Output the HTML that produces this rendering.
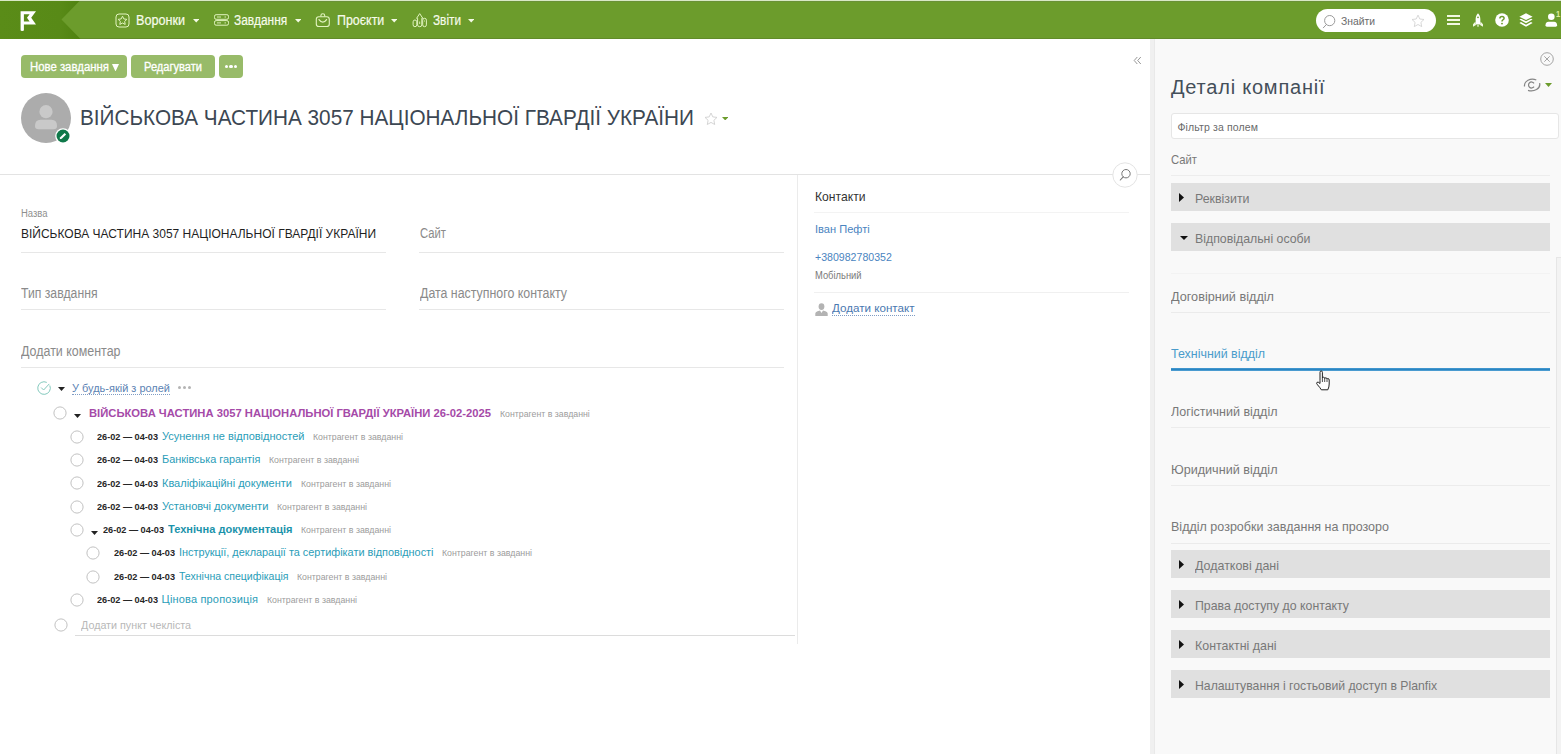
<!DOCTYPE html>
<html lang="uk"><head><meta charset="utf-8"><title>ВІЙСЬКОВА ЧАСТИНА 3057 НАЦІОНАЛЬНОЇ ГВАРДІЇ УКРАЇНИ</title>
<style>
html,body{margin:0;padding:0;background:#fff}
body{width:1561px;height:754px;position:relative;overflow:hidden;font-family:"Liberation Sans",sans-serif}
.r{position:absolute;display:block}
.t{position:absolute;display:inline-block;white-space:nowrap;line-height:1;transform-origin:0 0}
</style></head><body>
<div class="r" style="left:0px;top:0px;width:1561px;height:1px;background:#d9e8c6;"></div>
<div class="r" style="left:0px;top:1px;width:1561px;height:38px;background:#6c9c2c;"></div>
<div class="r" style="left:0px;top:1px;width:1561px;height:1px;background:#6a9137;"></div>
<div class="r" style="left:0px;top:38px;width:1561px;height:1px;background:#618b2a;"></div>
<svg class="r" style="left:0;top:1px" width="90" height="38" viewBox="0 0 90 38"><defs><linearGradient id="g1" x1="0" y1="0" x2="1" y2="0"><stop offset="0" stop-color="#5a8c18"/><stop offset="0.75" stop-color="#588a17"/><stop offset="1" stop-color="#4f8210"/></linearGradient></defs><path d="M0 0H79.5L61.5 18.5L80.5 38H0Z" fill="url(#g1)"/><path d="M20.6 10.2H36L31.2 16.8L36 23.6H23.9V29.2Q23.9 30 22.2 30Q20.6 30 20.6 29.2Z M23.9 13.3V20.5H29.6L27 16.8L29.6 13.3Z" fill="#fff" fill-rule="evenodd"/></svg>
<svg class="r" style="left:115px;top:13px" width="15" height="15" viewBox="0 0 15 15" fill="none" stroke="#e2f4c0" stroke-width="1"><rect x="1" y="1" width="13" height="13" rx="3"/><path d="M7.5 3.2l1.35 2.75 3 .4-2.2 2.1.55 3-2.7-1.45-2.7 1.45.55-3-2.2-2.1 3-.4z" stroke-linejoin="round"/></svg>
<svg class="r" style="left:213.5px;top:14px" width="15" height="12" viewBox="0 0 15 12" fill="none" stroke="#e2f4c0" stroke-width="1"><rect x="0.5" y="0.7" width="14" height="4.6" rx="1.6"/><rect x="0.5" y="6.6" width="14" height="4.6" rx="1.6"/><path d="M3 3h4M10.5 3h1.5M3 8.9h4M10.5 8.9h1.5" stroke-width="0.9"/></svg>
<svg class="r" style="left:315px;top:12px" width="16" height="16" viewBox="0 0 16 16" fill="none" stroke="#e2f4c0" stroke-width="1.1"><rect x="1.3" y="4.7" width="13" height="9.8" rx="2.6"/><path d="M5.9 4.5V3.6Q5.9 1.8 7.8 1.8Q9.700 1.8 9.700 3.6V4.5"/><path d="M4 7.600Q7.800 12.800 11.600 7.600" stroke-linecap="round" stroke-width="1.2"/></svg>
<svg class="r" style="left:411.5px;top:12px" width="16" height="16" viewBox="0 0 16 16" fill="none" stroke="#e2f4c0" stroke-width="1"><rect x="1.1" y="8" width="3.7" height="6.700" rx="1.850"/><path d="M5.600 13V6.300H4.600L7.700 1.600L10.800 6.300H9.800V13Q9.800 14.700 7.700 14.700Q5.600 14.700 5.600 13Z" stroke-linejoin="round"/><rect x="10.700" y="6.300" width="3.700" height="8.400" rx="1.850"/><path d="M7.700 9.500V12M12.500 8.500V9.500" stroke-width="0.9"/></svg>
<span class="t" style="left:136.40px;top:13px;font-size:14px;color:#f6fbea;transform:scaleX(0.9031);-webkit-text-stroke:0.2px #f6fbea;">Воронки</span>
<span class="t" style="left:234.00px;top:13px;font-size:14px;color:#f6fbea;transform:scaleX(0.8509);-webkit-text-stroke:0.2px #f6fbea;">Завдання</span>
<span class="t" style="left:336.70px;top:13px;font-size:14px;color:#f6fbea;transform:scaleX(0.8876);-webkit-text-stroke:0.2px #f6fbea;">Проєкти</span>
<span class="t" style="left:432.70px;top:13px;font-size:14px;color:#f6fbea;transform:scaleX(0.8424);-webkit-text-stroke:0.2px #f6fbea;">Звіти</span>
<svg class="r" style="left:192.8px;top:19.2px" width="6.4" height="3.4" viewBox="0 0 6.4 3.4"><path d="M0 0h6.4L3.2 3.4z" fill="#f4fae6"/></svg>
<svg class="r" style="left:294.5px;top:19.2px" width="6.4" height="3.4" viewBox="0 0 6.4 3.4"><path d="M0 0h6.4L3.2 3.4z" fill="#f4fae6"/></svg>
<svg class="r" style="left:390.8px;top:19.2px" width="6.4" height="3.4" viewBox="0 0 6.4 3.4"><path d="M0 0h6.4L3.2 3.4z" fill="#f4fae6"/></svg>
<svg class="r" style="left:467.8px;top:19.2px" width="6.4" height="3.4" viewBox="0 0 6.4 3.4"><path d="M0 0h6.4L3.2 3.4z" fill="#f4fae6"/></svg>
<div class="r" style="left:1316px;top:9px;width:120px;height:23px;background:#fff;border-radius:12px;"></div>
<svg class="r" style="left:1322px;top:14px" width="14" height="15" viewBox="0 0 14 15" fill="none" stroke="#9a9a9a" stroke-width="1"><circle cx="7.7" cy="6.6" r="5.1"/><path d="M4.3 10.6L1.3 13.8" stroke-linecap="round"/></svg>
<span class="t" style="left:1341.00px;top:16px;font-size:11px;color:#6a6a6a;transform:scaleX(0.9402);">Знайти</span>
<svg class="r" style="left:1410.5px;top:14px" width="14" height="14" viewBox="0 0 14 14" fill="none" stroke="#d4d4d4" stroke-width="0.9"><path d="M7 1.1l1.8 3.9 4.2.5-3.1 2.9.8 4.2L7 10.5l-3.7 2.1.8-4.2L1 5.5l4.2-.5z" stroke-linejoin="round"/></svg>
<div class="r" style="left:1446.8px;top:15px;width:13.2px;height:1.9px;background:#f1f8e2;"></div>
<div class="r" style="left:1446.8px;top:19.2px;width:13.2px;height:1.9px;background:#f1f8e2;"></div>
<div class="r" style="left:1446.8px;top:23.4px;width:13.2px;height:1.9px;background:#f1f8e2;"></div>
<svg class="r" style="left:1471.5px;top:13px" width="12" height="14.5" viewBox="0 0 12 14.5"><path d="M6 0.2C8.2 2.4 8.6 5.4 8.3 8.4L8 11.5H4L3.700 8.4C3.4 5.4 3.8 2.4 6 0.200Z" fill="#fff"/><path d="M3.5 8.600L1 11.200V13.800L4 12Z M8.500 8.600L11 11.200V13.800L8 12Z" fill="#f1f8e2"/><path d="M5.300 12.100h1.400v1.700h-1.400z" fill="#e4f0cc"/><circle cx="6" cy="4.300" r="0.900" fill="#6c9c2c"/></svg>
<svg class="r" style="left:1494.5px;top:13.2px" width="14" height="14" viewBox="0 0 14 14"><circle cx="7" cy="7" r="6.8" fill="#fff"/><path d="M4.900 5.500Q4.900 3.400 7 3.400Q9.100 3.400 9.100 5.200Q9.100 6.300 7.900 6.900Q7 7.400 7 8.500" fill="none" stroke="#6c9c2c" stroke-width="1.500"/><circle cx="7" cy="10.600" r="0.950" fill="#6c9c2c"/></svg>
<svg class="r" style="left:1519px;top:13px" width="14" height="14.500" viewBox="0 0 14 14.500"><path d="M7 0.300L13.600 3.700L7 7.100L0.400 3.700Z" fill="#fff"/><path d="M2 5.700L0.400 6.600L7 10.200L13.600 6.600L12 5.700L7 8.300Z" fill="#fff"/><path d="M2 9.100L0.400 10L7 13.700L13.600 10L12 9.100L7 11.700Z" fill="#fff"/></svg>
<svg class="r" style="left:1544.5px;top:13px" width="13" height="14" viewBox="0 0 13 14"><circle cx="6.300" cy="3.800" r="3.300" fill="#fff"/><path d="M0.500 12.300Q0.500 8.700 3.600 8.700H9Q12.100 8.700 12.100 12.300Q12.100 13.700 10.800 13.700H1.800Q0.500 13.700 0.500 12.300Z" fill="#fff"/></svg>
<span class="t" style="left:1556.30px;top:10px;font-size:9px;color:#dcea9e;font-weight:bold;transform:scaleX(0.8392);">1</span>
<div class="r" style="left:21px;top:55px;width:105.5px;height:23px;background:#98bb69;border-radius:4px;"></div>
<div class="r" style="left:131px;top:55px;width:84px;height:23px;background:#98bb69;border-radius:4px;"></div>
<div class="r" style="left:219.3px;top:55px;width:23.4px;height:23px;background:#98bb69;border-radius:4px;"></div>
<span class="t" style="left:29.50px;top:61px;font-size:12px;color:#fff;transform:scaleX(0.9469);-webkit-text-stroke:0.3px #fff;">Нове завдання</span>
<svg class="r" style="left:112px;top:63.5px" width="7" height="7.500" viewBox="0 0 7 7.500"><path d="M0 0h7L3.500 7.500z" fill="#fff"/></svg>
<span class="t" style="left:144.00px;top:61px;font-size:12px;color:#fff;transform:scaleX(0.9238);-webkit-text-stroke:0.3px #fff;">Редагувати</span>
<div class="r" style="left:224.6px;top:65px;width:3.2px;height:3.2px;background:#fff;border-radius:2px;"></div>
<div class="r" style="left:229.4px;top:65px;width:3.2px;height:3.2px;background:#fff;border-radius:2px;"></div>
<div class="r" style="left:234.20000000000002px;top:65px;width:3.2px;height:3.2px;background:#fff;border-radius:2px;"></div>
<svg class="r" style="left:21px;top:93px" width="50" height="50" viewBox="0 0 50 50"><circle cx="25" cy="25" r="25" fill="#acacac"/><circle cx="25" cy="18.700" r="6.600" fill="#c9c9c9"/><path d="M14 33Q14 26.800 19.500 26.800H30.500Q36 26.800 36 33Q36 36.300 32.500 36.300H17.500Q14 36.300 14 33Z" fill="#c9c9c9"/></svg>
<svg class="r" style="left:54.500px;top:127.500px" width="16" height="16" viewBox="0 0 16 16"><circle cx="8" cy="8" r="7.800" fill="#fff"/><circle cx="8" cy="8" r="6.500" fill="#10794a"/><path d="M4.700 11.300L5.200 9.300L9.600 4.900L11.100 6.400L6.700 10.800Z" fill="#fff"/></svg>
<span class="t" style="left:80.00px;top:108px;font-size:21.5px;color:#3c4753;transform:scaleX(0.9651);">ВІЙСЬКОВА ЧАСТИНА 3057 НАЦІОНАЛЬНОЇ ГВАРДІЇ УКРАЇНИ</span>
<svg class="r" style="left:703.500px;top:111.500px" width="14" height="14" viewBox="0 0 14 14" fill="none" stroke="#cfcfcf" stroke-width="0.9"><path d="M7 1l1.800 3.900 4.200.5-3.100 2.900.8 4.200L7 10.400l-3.700 2.100.8-4.200L1 5.400l4.200-.5z" stroke-linejoin="round"/></svg>
<svg class="r" style="left:722px;top:117px" width="6.400" height="3.400" viewBox="0 0 6.400 3.400"><path d="M0 0h6.400L3.200 3.400z" fill="#6c9c2c"/></svg>
<svg class="r" style="left:1132.700px;top:55.600px" width="9" height="9" viewBox="0 0 9 9" fill="none" stroke="#8a8a8a" stroke-width="0.9"><path d="M4.300 1L1.200 4.500L4.300 8M7.800 1L4.700 4.500L7.800 8"/></svg>
<div class="r" style="left:0px;top:174px;width:1150px;height:1px;background:#e3e3e3;"></div>
<svg class="r" style="left:1112px;top:161.500px" width="26" height="26" viewBox="0 0 26 26"><circle cx="13" cy="13" r="12.200" fill="#fff" stroke="#e3e3e3" stroke-width="1"/><circle cx="14" cy="11.700" r="4.200" fill="none" stroke="#777" stroke-width="1"/><path d="M11.200 14.800L8.300 18" stroke="#777" stroke-width="1.100" stroke-linecap="round"/></svg>
<span class="t" style="left:21.00px;top:209px;font-size:10px;color:#8f8f8f;transform:scaleX(0.9459);">Назва</span>
<span class="t" style="left:21.00px;top:227px;font-size:13.5px;color:#1f1f1f;transform:scaleX(0.8887);">ВІЙСЬКОВА ЧАСТИНА 3057 НАЦІОНАЛЬНОЇ ГВАРДІЇ УКРАЇНИ</span>
<span class="t" style="left:419.50px;top:226px;font-size:14px;color:#8a8a8a;transform:scaleX(0.8053);">Сайт</span>
<span class="t" style="left:21.00px;top:286px;font-size:14px;color:#8a8a8a;transform:scaleX(0.8722);">Тип завдання</span>
<span class="t" style="left:419.50px;top:286px;font-size:14px;color:#8a8a8a;transform:scaleX(0.8843);">Дата наступного контакту</span>
<span class="t" style="left:21.00px;top:344px;font-size:14px;color:#8a8a8a;transform:scaleX(0.8891);">Додати коментар</span>
<div class="r" style="left:21px;top:252px;width:365px;height:1px;background:#e7e7e7;"></div>
<div class="r" style="left:419px;top:252px;width:365px;height:1px;background:#e7e7e7;"></div>
<div class="r" style="left:21px;top:309px;width:365px;height:1px;background:#e7e7e7;"></div>
<div class="r" style="left:419px;top:309px;width:365px;height:1px;background:#e7e7e7;"></div>
<div class="r" style="left:21px;top:367px;width:763px;height:1px;background:#e7e7e7;"></div>
<div class="r" style="left:797px;top:175px;width:1px;height:469px;background:#ebebeb;"></div>
<span class="t" style="left:814.50px;top:190px;font-size:13px;color:#333;transform:scaleX(0.9340);">Контакти</span>
<div class="r" style="left:814px;top:212px;width:315px;height:1px;background:#f3f3f3;"></div>
<span class="t" style="left:814.50px;top:224px;font-size:11.5px;color:#4a84c0;transform:scaleX(0.9629);">Іван Пефті</span>
<span class="t" style="left:814.50px;top:252px;font-size:11px;color:#4a84c0;transform:scaleX(0.9621);">+380982780352</span>
<span class="t" style="left:814.50px;top:271px;font-size:10px;color:#7a7a7a;transform:scaleX(0.9358);">Мобільний</span>
<div class="r" style="left:814px;top:292px;width:315px;height:1px;background:#f0f0f0;"></div>
<svg class="r" style="left:814.500px;top:302.500px" width="13" height="13" viewBox="0 0 13 13"><ellipse cx="6.500" cy="3.600" rx="2.900" ry="3.400" fill="#b3b3b3"/><path d="M0.300 13V10.600Q0.300 9 2.500 8.300L5 7.500L6.500 10L8 7.500L10.500 8.300Q12.700 9 12.700 10.600V13Z" fill="#b3b3b3"/></svg>
<span class="t" style="left:832.30px;top:303px;font-size:11.5px;color:#4a78b0;transform:scaleX(1.0103);">Додати контакт</span>
<div class="r" style="left:832px;top:315px;width:83px;height:0;border-top:1px dotted #7f9cc4"></div>
<svg class="r" style="left:37px;top:381px" width="14" height="14" viewBox="0 0 14 14" fill="none" stroke="#84c9bd" stroke-width="1"><path d="M12.800 4.500A6.300 6.300 0 1 1 9.800 1.400"/><path d="M4.400 6.800L6.600 9L12 3.200" stroke-linecap="round" stroke-linejoin="round"/></svg>
<svg class="r" style="left:58px;top:386.5px" width="7" height="4" viewBox="0 0 7 4"><path d="M0 0h7L3.500 4z" fill="#222"/></svg>
<span class="t" style="left:71.50px;top:383px;font-size:11.5px;color:#5b82b3;transform:scaleX(0.9542);">У будь-якій з ролей</span>
<div class="r" style="left:72px;top:394px;width:97.500px;height:0;border-top:1px dotted #7f9cc4"></div>
<div class="r" style="left:178.3px;top:386px;width:3px;height:3px;background:#b4b4b4;border-radius:2px;"></div>
<div class="r" style="left:183.0px;top:386px;width:3px;height:3px;background:#b4b4b4;border-radius:2px;"></div>
<div class="r" style="left:187.8px;top:386px;width:3px;height:3px;background:#b4b4b4;border-radius:2px;"></div>
<svg class="r" style="left:52px;top:405.2px" width="16" height="16" viewBox="0 0 16 16"><circle cx="8" cy="8" r="6.1" fill="#fff" stroke="#c2c2c2" stroke-width="1"/></svg>
<svg class="r" style="left:74px;top:413.5px" width="7" height="4" viewBox="0 0 7 4"><path d="M0 0h7L3.500 4z" fill="#222"/></svg>
<span class="t" style="left:89.00px;top:408px;font-size:11.5px;color:#a54aa8;font-weight:bold;transform:scaleX(0.9768);">ВІЙСЬКОВА ЧАСТИНА 3057 НАЦІОНАЛЬНОЇ ГВАРДІЇ УКРАЇНИ 26-02-2025</span>
<span class="t" style="left:500.00px;top:410px;font-size:9px;color:#9c9c9c;transform:scaleX(0.9727);">Контрагент в завданні</span>
<svg class="r" style="left:68.6px;top:428.7px" width="16" height="16" viewBox="0 0 16 16"><circle cx="8" cy="8" r="6.1" fill="#fff" stroke="#c2c2c2" stroke-width="1"/></svg>
<span class="t" style="left:97.30px;top:432px;font-size:9.5px;color:#262626;font-weight:bold;transform:scaleX(0.9626);">26-02 — 04-03</span>
<span class="t" style="left:161.60px;top:431px;font-size:11px;color:#2a9db8;transform:scaleX(1.0014);">Усунення не відповідностей</span>
<span class="t" style="left:313.00px;top:433px;font-size:9px;color:#9c9c9c;transform:scaleX(0.9749);">Контрагент в завданні</span>
<svg class="r" style="left:68.6px;top:452px" width="16" height="16" viewBox="0 0 16 16"><circle cx="8" cy="8" r="6.1" fill="#fff" stroke="#c2c2c2" stroke-width="1"/></svg>
<span class="t" style="left:97.30px;top:455px;font-size:9.5px;color:#262626;font-weight:bold;transform:scaleX(0.9626);">26-02 — 04-03</span>
<span class="t" style="left:161.60px;top:454px;font-size:11px;color:#2a9db8;transform:scaleX(0.9892);">Банківська гарантія</span>
<span class="t" style="left:268.80px;top:456px;font-size:9px;color:#9c9c9c;transform:scaleX(0.9749);">Контрагент в завданні</span>
<svg class="r" style="left:68.6px;top:475.3px" width="16" height="16" viewBox="0 0 16 16"><circle cx="8" cy="8" r="6.1" fill="#fff" stroke="#c2c2c2" stroke-width="1"/></svg>
<span class="t" style="left:97.30px;top:479px;font-size:9.5px;color:#262626;font-weight:bold;transform:scaleX(0.9626);">26-02 — 04-03</span>
<span class="t" style="left:161.60px;top:478px;font-size:11px;color:#2a9db8;transform:scaleX(0.9991);">Кваліфікаційні документи</span>
<span class="t" style="left:300.50px;top:480px;font-size:9px;color:#9c9c9c;transform:scaleX(0.9749);">Контрагент в завданні</span>
<svg class="r" style="left:68.6px;top:498.6px" width="16" height="16" viewBox="0 0 16 16"><circle cx="8" cy="8" r="6.1" fill="#fff" stroke="#c2c2c2" stroke-width="1"/></svg>
<span class="t" style="left:97.30px;top:502px;font-size:9.5px;color:#262626;font-weight:bold;transform:scaleX(0.9626);">26-02 — 04-03</span>
<span class="t" style="left:161.60px;top:501px;font-size:11px;color:#2a9db8;transform:scaleX(1.0101);">Установчі документи</span>
<span class="t" style="left:277.00px;top:503px;font-size:9px;color:#9c9c9c;transform:scaleX(0.9749);">Контрагент в завданні</span>
<svg class="r" style="left:68.6px;top:521.9px" width="16" height="16" viewBox="0 0 16 16"><circle cx="8" cy="8" r="6.1" fill="#fff" stroke="#c2c2c2" stroke-width="1"/></svg>
<svg class="r" style="left:90.5px;top:530.9px" width="7" height="4" viewBox="0 0 7 4"><path d="M0 0h7L3.500 4z" fill="#222"/></svg>
<span class="t" style="left:103.00px;top:525px;font-size:9.5px;color:#262626;font-weight:bold;transform:scaleX(0.9626);">26-02 — 04-03</span>
<span class="t" style="left:167.50px;top:524px;font-size:11px;color:#1b93ab;font-weight:bold;transform:scaleX(1.0042);">Технічна документація</span>
<span class="t" style="left:300.50px;top:526px;font-size:9px;color:#9c9c9c;transform:scaleX(0.9749);">Контрагент в завданні</span>
<svg class="r" style="left:85.25px;top:545.2px" width="16" height="16" viewBox="0 0 16 16"><circle cx="8" cy="8" r="6.1" fill="#fff" stroke="#c2c2c2" stroke-width="1"/></svg>
<span class="t" style="left:114.00px;top:548px;font-size:9.5px;color:#262626;font-weight:bold;transform:scaleX(0.9626);">26-02 — 04-03</span>
<span class="t" style="left:178.50px;top:547px;font-size:11px;color:#2a9db8;transform:scaleX(0.9900);">Інструкції, декларації та сертифікати відповідності</span>
<span class="t" style="left:441.50px;top:549px;font-size:9px;color:#9c9c9c;transform:scaleX(0.9749);">Контрагент в завданні</span>
<svg class="r" style="left:85.25px;top:568.5px" width="16" height="16" viewBox="0 0 16 16"><circle cx="8" cy="8" r="6.1" fill="#fff" stroke="#c2c2c2" stroke-width="1"/></svg>
<span class="t" style="left:114.00px;top:572px;font-size:9.5px;color:#262626;font-weight:bold;transform:scaleX(0.9626);">26-02 — 04-03</span>
<span class="t" style="left:178.50px;top:571px;font-size:11px;color:#2a9db8;transform:scaleX(0.9575);">Технічна специфікація</span>
<span class="t" style="left:297.00px;top:573px;font-size:9px;color:#9c9c9c;transform:scaleX(0.9749);">Контрагент в завданні</span>
<svg class="r" style="left:68.6px;top:591.8px" width="16" height="16" viewBox="0 0 16 16"><circle cx="8" cy="8" r="6.1" fill="#fff" stroke="#c2c2c2" stroke-width="1"/></svg>
<span class="t" style="left:97.30px;top:595px;font-size:9.5px;color:#262626;font-weight:bold;transform:scaleX(0.9626);">26-02 — 04-03</span>
<span class="t" style="left:161.60px;top:594px;font-size:11px;color:#2a9db8;letter-spacing:0.169px;">Цінова пропозиція</span>
<span class="t" style="left:267.00px;top:596px;font-size:9px;color:#9c9c9c;transform:scaleX(0.9749);">Контрагент в завданні</span>
<svg class="r" style="left:52.75px;top:616.5px" width="16" height="16" viewBox="0 0 16 16"><circle cx="8" cy="8" r="6.1" fill="#fff" stroke="#c2c2c2" stroke-width="1"/></svg>
<span class="t" style="left:81.00px;top:620px;font-size:11.5px;color:#b8b8b8;transform:scaleX(0.9335);">Додати пункт чекліста</span>
<div class="r" style="left:75px;top:635px;width:720px;height:1px;background:#dcdcdc;"></div>
<div class="r" style="left:1150px;top:39px;width:5px;height:715px;background:#f0f0f0;"></div>
<div class="r" style="left:1154px;top:39px;width:1px;height:715px;background:#e9e9e9;"></div>
<div class="r" style="left:1155px;top:39px;width:406px;height:715px;background:#f9f9f9;"></div>
<div class="r" style="left:1556px;top:257px;width:5px;height:497px;background:#f3f3f3;border-left:1px solid #e6e6e6;border-top:1px solid #e6e6e6;box-sizing:border-box;"></div>
<svg class="r" style="left:1539.500px;top:52px" width="14" height="14" viewBox="0 0 14 14" fill="none" stroke="#9a9a9a" stroke-width="0.9"><circle cx="7" cy="7" r="6.300"/><path d="M4.300 4.300L9.700 9.700M9.700 4.300L4.300 9.700"/></svg>
<svg class="r" style="left:1522.500px;top:77.500px" width="18" height="14" viewBox="0 0 18 14" fill="none" stroke="#858585" stroke-width="1.25"><path d="M1.500 8.500Q1 4.500 5 2.300Q9 0.300 13.300 2"/><path d="M16.600 5.200Q17.600 9 13.500 11.500Q9.500 13.700 5 12.300"/><path d="M11 5.300A3 3 0 1 0 11 8.700"/></svg>
<svg class="r" style="left:1545px;top:83px" width="7" height="4" viewBox="0 0 7 4"><path d="M0 0h7L3.500 4z" fill="#6c9c2c"/></svg>
<span class="t" style="left:1171.00px;top:77px;font-size:20px;color:#444f5a;letter-spacing:0.781px;">Деталі компанії</span>
<div class="r" style="left:1171px;top:112.5px;width:387.5px;height:26.5px;background:#fff;border:1px solid #e6e6e6;border-radius:3px;box-sizing:border-box;"></div>
<span class="t" style="left:1177.50px;top:122px;font-size:10.5px;color:#6a6a6a;letter-spacing:0.128px;">Фільтр за полем</span>
<span class="t" style="left:1171.00px;top:153px;font-size:13.5px;color:#787878;transform:scaleX(0.8351);">Сайт</span>
<div class="r" style="left:1171px;top:175px;width:379px;height:1px;background:#ededed;"></div>
<div class="r" style="left:1171px;top:182.6px;width:379px;height:28px;background:#e0e0e0;"></div>
<svg class="r" style="left:1179px;top:192.6px" width="5" height="9" viewBox="0 0 5 9"><path d="M0 0v9L5 4.500z" fill="#111"/></svg>
<span class="t" style="left:1195.00px;top:192px;font-size:13.5px;color:#787878;transform:scaleX(0.9167);">Реквізити</span>
<div class="r" style="left:1171px;top:222.7px;width:379px;height:28px;background:#e0e0e0;"></div>
<svg class="r" style="left:1179.500px;top:236.2px" width="8" height="4" viewBox="0 0 8 4"><path d="M0 0h8L4 4z" fill="#111"/></svg>
<span class="t" style="left:1195.00px;top:232px;font-size:13.5px;color:#787878;transform:scaleX(0.9126);">Відповідальні особи</span>
<div class="r" style="left:1171px;top:273px;width:379px;height:1px;background:#f3f3f3;"></div>
<span class="t" style="left:1171.00px;top:290px;font-size:13.5px;color:#787878;transform:scaleX(0.9389);">Договірний відділ</span>
<div class="r" style="left:1171px;top:312px;width:379px;height:1px;background:#ebebeb;"></div>
<span class="t" style="left:1171.00px;top:347px;font-size:13.5px;color:#4a9ccb;transform:scaleX(0.9214);">Технічний відділ</span>
<div class="r" style="left:1171px;top:368px;width:379px;height:1px;background:#3f95cd;"></div>
<div class="r" style="left:1171px;top:369px;width:379px;height:1px;background:#2a85c2;"></div>
<div class="r" style="left:1171px;top:370px;width:379px;height:1px;background:#4a9bd0;"></div>
<span class="t" style="left:1171.00px;top:405px;font-size:13.5px;color:#787878;transform:scaleX(0.9270);">Логістичний відділ</span>
<div class="r" style="left:1171px;top:427px;width:379px;height:1px;background:#ececec;"></div>
<span class="t" style="left:1171.00px;top:463px;font-size:13.5px;color:#787878;transform:scaleX(0.9324);">Юридичний відділ</span>
<div class="r" style="left:1171px;top:485px;width:379px;height:1px;background:#ececec;"></div>
<span class="t" style="left:1171.00px;top:520px;font-size:13.5px;color:#787878;transform:scaleX(0.9281);">Відділ розробки завдання на прозоро</span>
<div class="r" style="left:1171px;top:543px;width:379px;height:1px;background:#ebebeb;"></div>
<div class="r" style="left:1171px;top:550.1px;width:379px;height:28px;background:#e0e0e0;"></div>
<svg class="r" style="left:1179px;top:560.1px" width="5" height="9" viewBox="0 0 5 9"><path d="M0 0v9L5 4.500z" fill="#111"/></svg>
<span class="t" style="left:1195.00px;top:559px;font-size:13.5px;color:#787878;transform:scaleX(0.9221);">Додаткові дані</span>
<div class="r" style="left:1171px;top:590.1px;width:379px;height:28px;background:#e0e0e0;"></div>
<svg class="r" style="left:1179px;top:600.1px" width="5" height="9" viewBox="0 0 5 9"><path d="M0 0v9L5 4.500z" fill="#111"/></svg>
<span class="t" style="left:1195.00px;top:599px;font-size:13.5px;color:#787878;transform:scaleX(0.9120);">Права доступу до контакту</span>
<div class="r" style="left:1171px;top:630.1px;width:379px;height:28px;background:#e0e0e0;"></div>
<svg class="r" style="left:1179px;top:640.1px" width="5" height="9" viewBox="0 0 5 9"><path d="M0 0v9L5 4.500z" fill="#111"/></svg>
<span class="t" style="left:1195.00px;top:639px;font-size:13.5px;color:#787878;transform:scaleX(0.9194);">Контактні дані</span>
<div class="r" style="left:1171px;top:670.1px;width:379px;height:28px;background:#e0e0e0;"></div>
<svg class="r" style="left:1179px;top:680.1px" width="5" height="9" viewBox="0 0 5 9"><path d="M0 0v9L5 4.500z" fill="#111"/></svg>
<span class="t" style="left:1195.00px;top:679px;font-size:13.5px;color:#787878;transform:scaleX(0.9059);">Налаштування і гостьовий доступ в Planfix</span>
<svg class="r" style="left:1315px;top:369.500px" width="16" height="21" viewBox="0 0 16 21"><path d="M5 10.500V2.300Q5 1 6.200 1Q7.400 1 7.400 2.300V8.200Q7.400 7.200 8.500 7.200Q9.700 7.200 9.700 8.600Q9.700 7.800 10.800 7.800Q12 7.800 12 9.200Q12 8.600 13 8.600Q14.200 8.600 14.200 10V14Q14.200 17 12.800 19.800H6.300Q5 17.500 2.500 14.800Q1 13.200 2 12.300Q3 11.500 5 13.500Z" fill="#fff" stroke="#222" stroke-width="1" stroke-linejoin="round"/><path d="M7.400 8.200V12M9.700 8.800V12M12 9.500V12" stroke="#222" stroke-width="0.8"/></svg>
</body></html>
